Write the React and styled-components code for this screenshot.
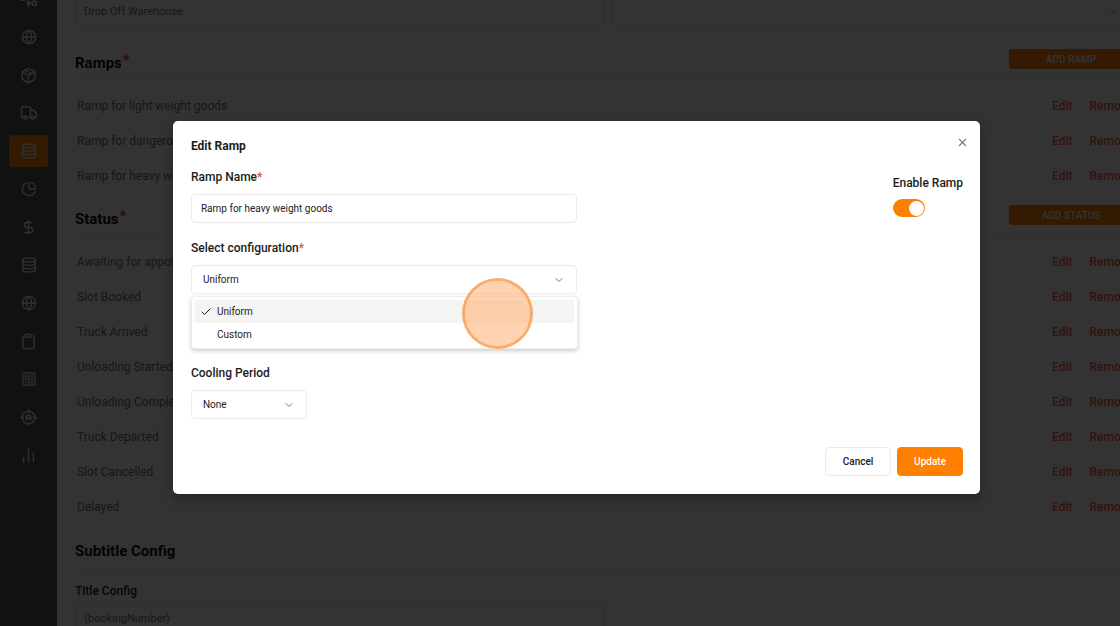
import React, { useState } from "react";
import styled, { createGlobalStyle } from "styled-components";
import {
  Globe,
  Package,
  Truck,
  ChartPie,
  DollarSign,
  Clipboard,
  ChevronDown,
  Check,
  X,
  ChartNoAxesColumn,
} from "lucide-react";

const stroke = {
  width: 16,
  height: 16,
  viewBox: "0 0 24 24",
  fill: "none",
  stroke: "currentColor",
  strokeWidth: 2,
  strokeLinecap: "round",
  strokeLinejoin: "round",
};

const Network = () => (
  <svg {...stroke} width={17} height={17}>
    <rect x="1" y="8" width="5" height="5" />
    <rect x="17.500" y="14.500" width="5.500" height="5.500" />
    <circle cx="12" cy="17.300" r="1.800" />
    <path d="M6 10.500h6v5M12 19.200v2M14 17.300h3.500M12 10.500V4" />
  </svg>
);

const Stack = () => (
  <svg {...stroke}>
    <ellipse cx="12" cy="4.500" rx="9.500" ry="3" />
    <path d="M2.500 4.500v15c0 1.700 4.200 3 9.500 3s9.500-1.300 9.500-3v-15" />
    <path d="M2.500 9.500c0 1.700 4.200 3 9.500 3s9.500-1.300 9.500-3" />
    <path d="M2.500 14.500c0 1.700 4.200 3 9.500 3s9.500-1.300 9.500-3" />
  </svg>
);

const Calculator = () => (
  <svg {...stroke} width={14} height={14}>
    <rect x="1.500" y="1.500" width="21" height="21" rx="2" />
    <path d="M12 1.500v21M1.500 12h21M4.500 6.800h4.500M6.800 4.500v4.500M15.500 5l3.500 3.500M19 5l-3.500 3.500M4.500 17.300h4.500M15 15.800h4.500M15 19h4.500" />
  </svg>
);

const Target = () => (
  <svg {...stroke} width={17} height={17}>
    <circle cx="12" cy="12" r="9" />
    <path d="M12 .8v4M12 19.200v4M.8 12h4M19.200 12h4" />
    <path
      d="M12 7l4.500 2v5.500l-4.500 2.500-4.500-2.500V9z"
      fill="currentColor"
      stroke="none"
    />
    <path d="M7.800 9.500L12 11.500l4.200-2M12 11.500v5" stroke="#555" strokeWidth="1" />
  </svg>
);

const nav = [
  { name: "Network", icon: <Network /> },
  { name: "Regions", icon: <Globe size={16} /> },
  { name: "Packages", icon: <Package size={17} /> },
  { name: "Trucks", icon: <Truck size={18} /> },
  { name: "Master data", icon: <Stack />, active: true },
  { name: "Reports", icon: <ChartPie size={16} /> },
  { name: "Billing", icon: <DollarSign size={17} /> },
  { name: "Storage", icon: <Stack /> },
  { name: "Locations", icon: <Globe size={16} /> },
  { name: "Orders", icon: <Clipboard size={17} /> },
  { name: "Calculator", icon: <Calculator /> },
  { name: "Tracking", icon: <Target /> },
  { name: "Analytics", icon: <ChartNoAxesColumn size={17} /> },
];

const ramps = [
  "Ramp for light weight goods",
  "Ramp for dangerous goods",
  "Ramp for heavy weight goods",
];

const statuses = [
  "Awaiting for appointment",
  "Slot Booked",
  "Truck Arrived",
  "Unloading Started",
  "Unloading Completed",
  "Truck Departed",
  "Slot Cancelled",
  "Delayed",
];

function Items({ items }) {
  return (
    <List>
      {items.map((item) => (
        <Item key={item}>
          <span>{item}</span>
          <Actions>
            <TextButton>Edit</TextButton>
            <TextButton>Remove</TextButton>
          </Actions>
        </Item>
      ))}
    </List>
  );
}

function EditRamp() {
  const [name, setName] = useState("Ramp for heavy weight goods");
  const [config, setConfig] = useState("Uniform");
  const [enabled, setEnabled] = useState(true);
  const options = ["Uniform", "Custom"];
  return (
    <Modal role="dialog" aria-labelledby="modal-title">
      <ModalTop>
        <h2 id="modal-title">Edit Ramp</h2>
        <Close aria-label="Close">
          <X size={13} strokeWidth={2} />
        </Close>
      </ModalTop>
      <ModalBody>
        <Fields>
          <Label htmlFor="ramp-name">
            Ramp Name<Star>*</Star>
          </Label>
          <TextBox
            id="ramp-name"
            value={name}
            onChange={(e) => setName(e.target.value)}
          />
          <Label htmlFor="config">
            Select configuration<Star>*</Star>
          </Label>
          <Dropdown>
            <select
              id="config"
              value={config}
              onChange={(e) => setConfig(e.target.value)}
            >
              {options.map((o) => (
                <option key={o}>{o}</option>
              ))}
            </select>
            <ChevronDown size={12} strokeWidth={2} />
            <Menu role="listbox">
              {options.map((o) => (
                <Option
                  key={o}
                  role="option"
                  aria-selected={o === config}
                  $selected={o === config}
                  onClick={() => setConfig(o)}
                >
                  {o === config && <Check size={12} strokeWidth={2} />}
                  <span>{o}</span>
                </Option>
              ))}
              <Ripple />
            </Menu>
          </Dropdown>
          <Label htmlFor="cooling" $far>
            Cooling Period
          </Label>
          <Dropdown $small>
            <select id="cooling" defaultValue="None">
              <option>None</option>
            </select>
            <ChevronDown size={12} strokeWidth={2} />
          </Dropdown>
        </Fields>
        <Enable>
          <span>Enable Ramp</span>
          <input
            type="checkbox"
            role="switch"
            checked={enabled}
            onChange={(e) => setEnabled(e.target.checked)}
          />
        </Enable>
      </ModalBody>
      <Footer>
        <Button>Cancel</Button>
        <Button $primary>Update</Button>
      </Footer>
    </Modal>
  );
}

export default function App() {
  return (
    <Viewport>
      <GlobalStyle />
      <Page>
        <Sidebar>
          {nav.map(({ name, icon, active }) => (
            <NavLink key={name} href="#" aria-label={name} $active={active}>
              {icon}
            </NavLink>
          ))}
        </Sidebar>
        <Content>
          <TopFields>
            <PageInput defaultValue="Drop Off Warehouse" aria-label="Type" $cut />
            <PageSelect>
              <select aria-label="Warehouse" />
              <ChevronDown size={12} />
            </PageSelect>
          </TopFields>
          <SectionHead $height={51}>
            <h3>
              Ramps<sup>*</sup>
            </h3>
            <AddButton>ADD RAMP</AddButton>
          </SectionHead>
          <Items items={ramps} />
          <SectionHead $height={40}>
            <h3>
              Status<sup>*</sup>
            </h3>
            <AddButton>ADD STATUS</AddButton>
          </SectionHead>
          <Items items={statuses} />
          <SectionHead $height={46} $loose>
            <h3>Subtitle Config</h3>
          </SectionHead>
          <TitleField>
            <label htmlFor="title-config">Title Config</label>
            <PageInput id="title-config" defaultValue="{bookingNumber}" />
          </TitleField>
        </Content>
        <Overlay>
          <EditRamp />
        </Overlay>
      </Page>
    </Viewport>
  );
}

const GlobalStyle = createGlobalStyle`
  * {
    box-sizing: border-box;
  }
  body {
    margin: 0;
    font-family: Roboto, "Liberation Sans", sans-serif;
    background: #333;
  }
  h2, h3, ul {
    margin: 0;
    padding: 0;
  }
  button, input, select {
    font-family: inherit;
    margin: 0;
  }
  button {
    cursor: pointer;
  }
`;
const Viewport = styled.div`
  height: 100vh;
  overflow: hidden;
`;
const Page = styled.div`
  position: relative;
  width: calc(100% + 33px);
  height: 100%;
  display: grid;
  grid-template-columns: 57px 1fr;
  background: #fff;
`;
const Sidebar = styled.nav`
  display: flex;
  flex-direction: column;
  align-items: center;
  gap: 6px;
  height: 100vh;
  overflow: hidden;
  background: #555;
  > :first-child {
    margin-top: -17px;
  }
`;
const NavLink = styled.a`
  flex: none;
  display: flex;
  align-items: center;
  justify-content: center;
  width: 39px;
  height: 32px;
  border-radius: 3px;
  color: #eee;
  background: ${(p) => (p.$active ? "#ff8000" : "transparent")};
`;
const Content = styled.main`
  height: 100vh;
  overflow: hidden;
  padding: 0 20px 0 18px;
`;
const TopFields = styled.div`
  display: grid;
  grid-template-columns: 50% 1fr;
  align-items: start;
  gap: 7px;
  height: 27px;
`;
const PageInput = styled.input`
  width: 100%;
  height: ${(p) => (p.$cut ? "27px" : "32px")};
  padding: ${(p) => (p.$cut ? "0 8px 3px" : "0 8px")};
  border: 1px solid #e5e5e5;
  border-top-width: ${(p) => (p.$cut ? "0" : "1px")};
  border-radius: ${(p) => (p.$cut ? "0 0 4px 4px" : "4px")};
  font-size: 11px;
  color: #777;
  background: #fff;
`;
const PageSelect = styled.div`
  display: grid;
  grid-template-columns: 1fr 24px;
  align-items: center;
  height: 25px;
  border: 1px solid #e5e5e5;
  border-top: none;
  border-radius: 0 0 4px 4px;
  color: #777;
  select {
    appearance: none;
    border: none;
    background: transparent;
  }
`;
const SectionHead = styled.div`
  display: flex;
  align-items: flex-end;
  justify-content: space-between;
  height: ${(p) => p.$height}px;
  border-bottom: 1px solid #e5e5e5;
  h3 {
    font-size: 15px;
    font-weight: 700;
    line-height: 20px;
    margin-bottom: ${(p) => (p.$loose ? "9px" : "4px")};
    color: #111;
  }
  sup {
    margin-left: 1px;
    font-size: 15px;
    font-weight: 500;
    line-height: 0;
    vertical-align: 3px;
    color: #ff3030;
  }
`;
const AddButton = styled.button`
  width: 124px;
  height: 20px;
  margin-bottom: 8px;
  border: none;
  border-radius: 3px;
  font-size: 10px;
  font-weight: 500;
  color: #fff;
  background: #ff8000;
`;
const List = styled.ul`
  padding-top: 11px;
  list-style: none;
`;
const Item = styled.li`
  display: flex;
  align-items: center;
  justify-content: space-between;
  height: 35px;
  padding: 0 2px;
  border-bottom: 1px solid #f8f8f8;
  font-size: 12px;
  line-height: 16px;
  color: #6b7280;
`;
const Actions = styled.div`
  display: flex;
  gap: 17px;
  margin-right: -2px;
`;
const TextButton = styled.button`
  padding: 0;
  border: none;
  background: none;
  font-size: 12px;
  font-weight: 500;
  color: #ff5c50;
`;
const TitleField = styled.div`
  display: flex;
  flex-direction: column;
  width: 50%;
  padding-top: 12px;
  label {
    height: 19px;
    font-size: 12px;
    font-weight: 500;
    line-height: 16px;
    color: #222;
  }
`;
const Overlay = styled.div`
  position: absolute;
  inset: 0;
  display: flex;
  align-items: center;
  justify-content: center;
  padding-bottom: 11px;
  background: rgba(0, 0, 0, 0.8);
`;
const Modal = styled.section`
  width: 70%;
  padding: 17px 17px 18px 18px;
  border-radius: 5px;
  background: #fff;
  color: #1c1c1c;
  box-shadow: 0 4px 12px rgba(0, 0, 0, 0.3);
`;
const ModalTop = styled.div`
  display: flex;
  justify-content: space-between;
  h2 {
    font-size: 12px;
    font-weight: 700;
    line-height: 16px;
  }
`;
const Close = styled.button`
  display: flex;
  align-items: center;
  height: 8px;
  padding: 0;
  margin-right: -6px;
  border: none;
  background: none;
  color: #777;
`;
const ModalBody = styled.div`
  display: flex;
  justify-content: space-between;
  align-items: flex-start;
`;
const Fields = styled.div`
  display: flex;
  flex-direction: column;
  width: 50%;
  padding-top: 15px;
`;
const Label = styled.label`
  margin: ${(p) => (p.$far ? "71px" : "0")} 0 9px;
  font-size: 12px;
  font-weight: 500;
  line-height: 16px;
`;
const Star = styled.span`
  color: #ef4444;
`;
const TextBox = styled.input`
  height: 29px;
  margin-bottom: 17px;
  padding: 0 9px;
  border: 1px solid #ececec;
  border-radius: 4px;
  outline: none;
  font-size: 10px;
  color: #222;
`;
const Dropdown = styled.div`
  position: relative;
  display: grid;
  align-items: center;
  width: ${(p) => (p.$small ? "116px" : "100%")};
  height: 29px;
  select {
    grid-area: 1 / 1;
    width: 100%;
    height: 29px;
    padding: 0 11px;
    appearance: none;
    border: 1px solid #ececec;
    border-radius: 4px;
    background: #fff;
    font-size: 10px;
    color: #222;
  }
  > svg {
    grid-area: 1 / 1;
    justify-self: end;
    margin-right: 12px;
    color: #777;
    pointer-events: none;
  }
`;
const Menu = styled.ul`
  position: absolute;
  top: 31px;
  left: 0;
  right: -1px;
  padding: 3px 3px 2px;
  border: 1px solid #eee;
  border-radius: 4px;
  background: #fff;
  box-shadow: 0 2px 4px rgba(0, 0, 0, 0.2);
  list-style: none;
`;
const Option = styled.li`
  display: grid;
  grid-template-columns: 17px 1fr;
  align-items: center;
  height: 23px;
  padding-left: 5px;
  border-radius: 2px;
  font-size: 10px;
  background: ${(p) => (p.$selected ? "#f4f4f3" : "transparent")};
  span {
    grid-column: 2;
  }
`;
/* click highlight over the open menu */
const Ripple = styled.div`
  position: absolute;
  top: -19px;
  right: 44px;
  width: 71px;
  height: 71px;
  border: 3px solid rgba(247, 153, 72, 0.8);
  border-radius: 50%;
  background: rgba(255, 170, 105, 0.52);
  background-clip: padding-box;
  pointer-events: none;
`;
const Enable = styled.label`
  display: flex;
  flex-direction: column;
  gap: 8px;
  margin-top: 21px;
  font-size: 12px;
  font-weight: 500;
  line-height: 16px;
  input {
    appearance: none;
    display: flex;
    align-items: center;
    justify-content: flex-end;
    width: 32px;
    height: 18px;
    padding: 1px;
    border-radius: 9px;
    background: #ff8000;
    cursor: pointer;
  }
  input::before {
    content: "";
    width: 15px;
    height: 15px;
    border-radius: 50%;
    background: #fff;
  }
  input:not(:checked) {
    justify-content: flex-start;
    background: #ccc;
  }
`;
const Footer = styled.div`
  display: flex;
  justify-content: flex-end;
  gap: 6px;
  margin-top: 28px;
`;
const Button = styled.button`
  width: 66px;
  height: 29px;
  border: 1px solid ${(p) => (p.$primary ? "#ff8000" : "#ececec")};
  border-radius: 4px;
  font-size: 10px;
  font-weight: 500;
  color: ${(p) => (p.$primary ? "#fff" : "#1c1c1c")};
  background: ${(p) => (p.$primary ? "#ff8000" : "#fff")};
`;
